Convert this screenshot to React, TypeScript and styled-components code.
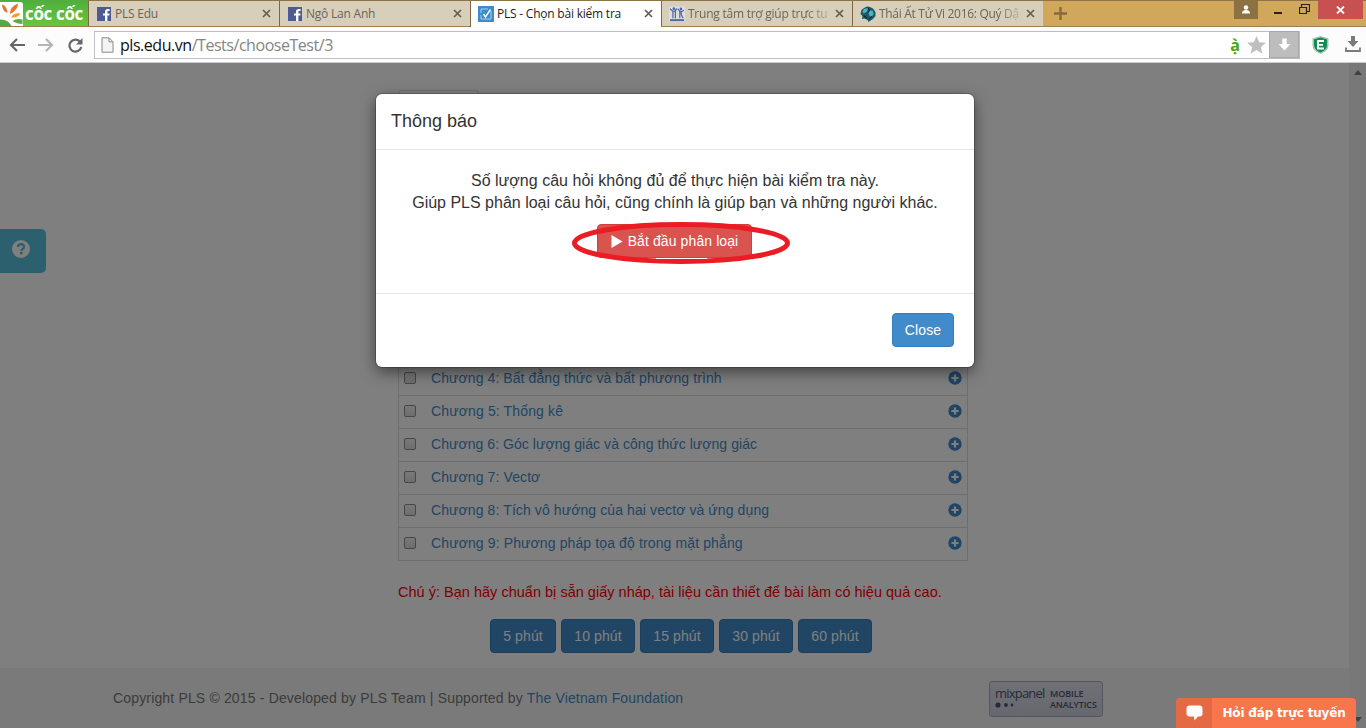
import React from 'react';
import styled, { createGlobalStyle } from 'styled-components';

const Global = createGlobalStyle`
  * { box-sizing: border-box; }
  html, body { margin: 0; padding: 0; }
  body { font-family: "Liberation Sans", Arial, sans-serif; font-size: 14px; line-height: 20px; color: #333; overflow: hidden; }
`;

const Window = styled.div`
  position: relative;
  width: 1366px;
  height: 728px;
  display: flex;
  flex-direction: column;
  overflow: hidden;
  background: #fff;
`;

/* ---------- browser chrome ---------- */
const TabStrip = styled.div`
  height: 27px;
  flex: none;
  display: flex;
  background: #d0a75b;
  border-top: 1px solid #8e7547;
  border-bottom: 1px solid #9c8052;
`;

const Brand = styled.div`
  width: 88px;
  height: 26px;
  margin-top: -1px;
  display: flex;
  align-items: center;
  background: linear-gradient(#4fae3d, #69c63b);
  color: #fff;
  font: 700 17px/25px "Open Sans", "Noto Sans", sans-serif;
  letter-spacing: -0.35px;
  white-space: nowrap;

  svg { flex: none; margin-right: 2px; }
`;

const Tab = styled.div<{ $active?: boolean }>`
  width: 191px;
  height: ${(p) => (p.$active ? 26 : 25)}px;
  flex: none;
  display: flex;
  align-items: center;
  padding: 0 8px ${(p) => (p.$active ? 1 : 0)}px 7px;
  border-left: 1px solid #806846;
  background: ${(p) => (p.$active ? '#fff' : '#d8cfba')};
  color: ${(p) => (p.$active ? '#1c1c1c' : '#6b6458')};
`;

const Favicon = styled.span`
  width: 16px;
  height: 16px;
  flex: none;
  display: flex;
  align-items: center;
  justify-content: center;
  margin-right: 3px;
`;

const TabTitle = styled.span<{ $fade?: boolean; $spacing?: number }>`
  flex: 1;
  min-width: 0;
  white-space: nowrap;
  font: 12px/20px "Open Sans", "Noto Sans", sans-serif;
  letter-spacing: ${(p) => p.$spacing ?? -0.22}px;
  ${(p) => p.$fade && 'mask-image: linear-gradient(90deg, #000 84%, rgba(0, 0, 0, 0.25) 100%);'}
`;

const TabClose = styled.svg`
  flex: none;
  margin-left: 6px;
`;

const WindowControls = styled.div`
  margin-left: auto;
  display: flex;
  height: 19px;
  margin-top: -1px;
`;

const Control = styled.div<{ $width: number; $bg?: string; $drop?: number }>`
  width: ${(p) => p.$width}px;
  height: 19px;
  display: flex;
  align-items: center;
  justify-content: center;
  padding-top: ${(p) => p.$drop ?? 0}px;
  background: ${(p) => p.$bg ?? 'transparent'};
`;

const Toolbar = styled.div`
  height: 36px;
  flex: none;
  display: flex;
  align-items: center;
  padding: 0 5px 0 8px;
  background: #fcfcfc;
  border-bottom: 1px solid #ccc;
`;

const NavIcons = styled.div`
  display: flex;
  width: 86px;
  gap: 11px;
`;

const AddressBar = styled.div`
  width: 1206px;
  height: 28px;
  display: flex;
  align-items: center;
  padding-left: 6px;
  border: 1px solid #bdbdc4;
  background: #fff;
`;

const Url = styled.span`
  flex: 1;
  margin-left: 6px;
  color: #858585;
  font: 16px/24px "Open Sans", "Noto Sans", sans-serif;
  letter-spacing: -0.46px;

  b { font-weight: 400; color: #111; }
`;

const AccentMark = styled.span`
  width: 14px;
  text-align: center;
  color: #43a615;
  font: 700 16px/22px "Noto Sans", sans-serif;
`;

const Star = styled.svg`
  margin-left: 5px;
`;

const SaveBox = styled.div`
  width: 30px;
  height: 27px;
  margin-left: 3px;
  display: flex;
  align-items: center;
  justify-content: center;
  background: #bdbdbd;
  border: 1px solid #a9a9a9;
`;

const Extensions = styled.div`
  display: flex;
  align-items: center;
  gap: 16px;
  margin-left: auto;
`;

/* ---------- web page ---------- */
const Viewport = styled.div`
  position: relative;
  flex: 1;
  display: flex;
`;

const Page = styled.div`
  flex: 1;
  display: flex;
  flex-direction: column;
`;

const Scrollbar = styled.div`
  width: 17px;
  display: flex;
  flex-direction: column;
  align-items: center;
  justify-content: space-between;
  padding: 7px 0 6px;
  background: #f1f1f1;
`;

const Content = styled.main`
  width: 570px;
  margin-left: 398px;
  padding-top: 27px;
  height: 605px;
  display: flex;
  flex-direction: column;
`;

const PageTab = styled.div`
  width: 81px;
  height: 42px;
  border: 1px solid #ddd;
  border-bottom: 0;
  border-radius: 4px 4px 0 0;
`;

const ChapterList = styled.ul`
  list-style: none;
  margin: 230px 0 0;
  padding: 0;
  border: 1px solid #ddd;
`;

const Chapter = styled.li`
  height: 33px;
  display: flex;
  align-items: center;
  padding: 0 5px 2px;
  color: #428bca;
  & + & { border-top: 1px solid #ddd; }
  &:first-child { height: 32px; }
`;

const Check = styled.span`
  width: 12px;
  height: 12px;
  margin-right: 15px;
  border: 1px solid #8f8f8f;
  border-radius: 2px;
  background: linear-gradient(#f2f2f2, #dcdcdc);
`;

const ChapterName = styled.span<{ $spacing: number }>`
  flex: 1;
  letter-spacing: ${(p) => p.$spacing}px;
`;

const Notice = styled.p`
  margin: 21px 0 17px;
  font-size: 14.5px;
  line-height: 20px;
  color: #f00;
  white-space: nowrap;
  letter-spacing: 0.015px;
`;

const Durations = styled.div`
  display: flex;
  gap: 5px;
  padding-left: 92px;
`;

const Button = styled.button<{ $tone?: 'danger'; $width: number }>`
  width: ${(p) => p.$width}px;
  height: 34px;
  padding: 0 0 0 ${(p) => (p.$tone ? 1 : 0)}px;
  display: flex;
  align-items: center;
  justify-content: center;
  gap: 5px;
  border: 1px solid ${(p) => (p.$tone ? '#d43f3a' : '#357ebd')};
  border-radius: 4px;
  background: ${(p) => (p.$tone ? '#d9534f' : '#428bca')};
  color: #fff;
  font: 14px/20px "Liberation Sans", Arial, sans-serif;
  letter-spacing: 0.1px;
  white-space: nowrap;
`;

const Footer = styled.footer`
  height: 60px;
  display: flex;
  align-items: center;
  padding: 0 246px 0 113px;
  justify-content: space-between;
  background: #f5f5f5;
  color: #777;

  a { color: #428bca; }
`;

const Copyright = styled.span`
  letter-spacing: 0.16px;
`;

const Badge = styled.div`
  width: 114px;
  height: 36px;
  margin-top: 2px;
  padding: 4px 0 0 5px;
  display: grid;
  grid-template-columns: 55px 1fr;
  grid-template-rows: 15px 10px;
  border: 1px solid #a9abc0;
  border-radius: 3px;
  background: linear-gradient(#e0e2ee, #cdd0de);
  color: #51536e;
`;

const BadgeName = styled.span`
  font: 13px/14px "Open Sans", sans-serif;
  letter-spacing: -0.8px;
`;

const BadgeWord = styled.span<{ $line: number }>`
  font: 600 9px/${(p) => p.$line}px "Open Sans", sans-serif;
  letter-spacing: -0.1px;
`;

const HelpTab = styled.div`
  position: absolute;
  left: 0;
  top: 166px;
  width: 46px;
  height: 44px;
  padding: 0 0 4px 12px;
  display: flex;
  align-items: center;
  border-radius: 0 5px 5px 0;
  background: #5bc0de;
`;

const Backdrop = styled.div`
  position: absolute;
  inset: 0;
  background: rgba(0, 0, 0, 0.5);
`;

/* ---------- dialog ---------- */
const Dialog = styled.section`
  position: absolute;
  left: 376px;
  top: 31px;
  width: 598px;
  height: 273px;
  display: flex;
  flex-direction: column;
  border-radius: 6px;
  background: #fff;
  box-shadow: 0 0 0 1px rgba(0, 0, 0, 0.2), 0 5px 15px rgba(0, 0, 0, 0.5);
`;

const DialogHeader = styled.header`
  height: 56px;
  padding: 15px 15px 0;
  border-bottom: 1px solid #e5e5e5;
  font-size: 18px;
  line-height: 24px;
`;

const DialogBody = styled.div`
  height: 143px;
  padding-top: 20px;
  display: flex;
  flex-direction: column;
  align-items: center;
  font-size: 16px;
  line-height: 22px;
`;

const Line = styled.span<{ $spacing?: number }>`
  white-space: nowrap;
  letter-spacing: ${(p) => p.$spacing ?? 0}px;
`;

const StartArea = styled.div`
  position: relative;
  margin: 10px 2px 0 0;
`;

const Highlight = styled.svg`
  position: absolute;
  left: -26px;
  top: -5px;
`;

const DialogFooter = styled.footer`
  flex: 1;
  display: flex;
  align-items: center;
  justify-content: flex-end;
  padding: 0 20px 2px 0;
  border-top: 1px solid #e5e5e5;
`;

/* ---------- chat ---------- */
const Chat = styled.div`
  position: absolute;
  right: 10px;
  bottom: 0;
  width: 180px;
  height: 30px;
  display: flex;
  overflow: hidden;
  border-radius: 4px 4px 0 0;
  background: #f9754b;
`;

const ChatIcon = styled.div`
  width: 36px;
  display: flex;
  align-items: center;
  justify-content: center;
  background: #e36a45;
`;

const ChatLabel = styled.span`
  flex: 1;
  text-align: center;
  color: #fff;
  font: 700 12px/30px "DejaVu Sans", Verdana, sans-serif;
  letter-spacing: -0.18px;
  white-space: nowrap;
`;

const Facebook = () => (
  <svg width="14" height="14" viewBox="0 0 14 14">
    <rect width="14" height="14" fill="#4d5b8e" />
    <path d="M8 14V8.6H6V6.4h2V4.8C8 2.9 9 2 10.8 2H12.6v2.1h-1.2c-.8 0-1 .3-1 1v1.3h2.2l-.3 2.2h-1.9V14Z" fill="#fff" />
  </svg>
);

const CheckPage = () => (
  <svg width="16" height="16" viewBox="0 0 16 16">
    <rect width="16" height="16" fill="#3b8ccc" />
    <path d="M3 7V3h7M3 9v4h10V5" fill="none" stroke="#a9d0ee" strokeWidth="1" />
    <path d="m5.500 8 2 3L12.500 3.500" fill="none" stroke="#fff" strokeWidth="1.400" />
  </svg>
);

const People = () => (
  <svg width="17" height="16" viewBox="0 0 17 16" fill="none" stroke="#4b66a6">
    <rect width="17" height="16" fill="#dfdedb" stroke="none" />
    <path d="M1 14.500h15" strokeWidth="2" />
    <path d="M1 2.500 4 5h2.500l2-3M4.200 5v7.500M6.800 5v7.500M9.500 2.500l2 2.800h2l2.500-1.300M11.500 5v7.500M13 5v3.500l2 4" strokeWidth="1.300" />
    <circle cx="5.200" cy="2.300" r="1.400" fill="#4b66a6" stroke="none" />
    <circle cx="12.700" cy="2.600" r="1.400" fill="#4b66a6" stroke="none" />
  </svg>
);

const Globe = () => (
  <svg width="16" height="16" viewBox="0 0 16 16">
    <path d="m4 2 3-1.500 3 .5 3 1.500 2.500 3.500v4L13 13l-2.500 1.500L8.500 16l-1-2-3-1.500L2 13l.5-3L.5 8l1-4Z" fill="#1d5a68" />
    <path d="m4 3 4-1-1 3.500-3.500 2L2.500 6Zm5.500 1L13 5l.5 3.500-3 3-2-4Z" fill="#4fb3c2" />
    <path d="m8 1.500 1.500 3-1.500 2M11.500 10l-2 3.500M3.500 9.500 7 12.500" fill="none" stroke="#102c38" strokeWidth="1.200" />
  </svg>
);

const Cross = () => (
  <TabClose width="9" height="9" viewBox="0 0 9 9">
    <path d="m1 1 7 7M8 1 1 8" stroke="#665d50" strokeWidth="1.7" />
  </TabClose>
);

const PlusCircle = () => (
  <svg width="14" height="14" viewBox="0 0 14 14">
    <circle cx="7" cy="7" r="6.7" fill="#428bca" />
    <path d="M7 3.4v7.2M3.4 7h7.2" stroke="#fff" strokeWidth="2.2" />
  </svg>
);

const chapters: [string, number][] = [
  ['Chương 4: Bất đẳng thức và bất phương trình', 0.085],
  ['Chương 5: Thống kê', 0.14],
  ['Chương 6: Góc lượng giác và công thức lượng giác', 0.055],
  ['Chương 7: Vectơ', 0.1],
  ['Chương 8: Tích vô hướng của hai vectơ và ứng dụng', 0.1],
  ['Chương 9: Phương pháp tọa độ trong mặt phẳng', 0.12],
];

const durations: [string, number][] = [
  ['5 phút', 66],
  ['10 phút', 74],
  ['15 phút', 74],
  ['30 phút', 74],
  ['60 phút', 74],
];

export default function App() {
  return (
    <Window>
      <Global />
      <TabStrip>
        <Brand>
          <svg width="23" height="26" viewBox="0 0 23 26">
            <path d="M0 2h20q3 0 3 3v21H0Z" fill="#fff" />
            <path d="M2 4.500q5 1.500 5.500 8.500Q2 11 2 4.500Z" fill="#ee6f2a" />
            <path d="M18 3.500Q18 10 10 14q0-7.500 8-10.500Z" fill="#ef7326" />
            <path d="M20.500 13.500Q18 18 11 17.500q3-5 9.500-4Z" fill="#f4992b" />
            <path d="M22.500 19.500v4.500q-6 0-10-3 4-3 10-1.500Z" fill="#58b043" />
            <path d="M0 19.500q8-.5 11.500 6.500H0Z" fill="#54a944" />
          </svg>
          cốc cốc
        </Brand>
        <Tab>
          <Favicon><Facebook /></Favicon>
          <TabTitle>PLS Edu</TabTitle>
          <Cross />
        </Tab>
        <Tab>
          <Favicon><Facebook /></Favicon>
          <TabTitle>Ngô Lan Anh</TabTitle>
          <Cross />
        </Tab>
        <Tab $active>
          <Favicon><CheckPage /></Favicon>
          <TabTitle>PLS - Chọn bài kiểm tra</TabTitle>
          <Cross />
        </Tab>
        <Tab>
          <Favicon><People /></Favicon>
          <TabTitle $fade $spacing={-0.24}>Trung tâm trợ giúp trực tu</TabTitle>
          <Cross />
        </Tab>
        <Tab>
          <Favicon><Globe /></Favicon>
          <TabTitle $fade $spacing={-0.3}>Thái Ất Tử Vi 2016: Quý Dậ</TabTitle>
          <Cross />
        </Tab>
        <Control $width={34} $drop={6}>
          <svg width="13" height="13" viewBox="0 0 13 13">
            <path d="M6.5 0v13M0 6.5h13" stroke="#87693c" strokeWidth="2.4" />
          </svg>
        </Control>
        <WindowControls>
          <Control $width={24} $bg="#8c7243">
            <svg width="10" height="10" viewBox="0 0 10 10" fill="#fff">
              <circle cx="5" cy="2.500" r="2.200" />
              <path d="M1 8.500q0-3.500 4-3.500t4 3.500Z" />
            </svg>
          </Control>
          <Control $width={40} $drop={3}>
            <svg width="8" height="8" viewBox="0 0 8 8"><path d="M0 6h8" stroke="#2a2118" strokeWidth="2" /></svg>
          </Control>
          <Control $width={12}>
            <svg width="11" height="11" viewBox="0 0 11 11" fill="none" stroke="#2a2118">
              <path d="M.5 3.5h7v6h-7ZM2.5 3V.5h8v7H8" strokeWidth="1.2" />
            </svg>
          </Control>
          <Control $width={8} />
          <Control $width={45} $bg="#c75050">
            <svg width="9" height="8" viewBox="0 0 9 8"><path d="m1 .5 7 7M8 .5l-7 7" stroke="#fff" strokeWidth="1.8" /></svg>
          </Control>
          <Control $width={3} />
        </WindowControls>
      </TabStrip>

      <Toolbar>
        <NavIcons>
          <svg width="18" height="16" viewBox="0 0 18 16" fill="none" stroke="#666" strokeWidth="2.2"><path d="M17 8H4M9 2 3 8l6 6" /></svg>
          <svg width="18" height="16" viewBox="0 0 18 16" fill="none" stroke="#b5b5b5" strokeWidth="2.2"><path d="M1 8h13M9 2l6 6-6 6" /></svg>
          <svg width="18" height="16" viewBox="0 0 18 16"><path d="M14.3 5A6 6 0 1 0 15.3 10" fill="none" stroke="#666" strokeWidth="2.2" /><path d="M16.5 1v6.5H10Z" fill="#666" /></svg>
        </NavIcons>
        <AddressBar>
          <svg width="13" height="16" viewBox="0 0 13 16"><path d="M1 .8h7l4 4v10.4H1ZM8 .8v4h4" fill="#f3f3f3" stroke="#8a8a8a" /></svg>
          <Url><b>pls.edu.vn</b>/Tests/chooseTest/3</Url>
          <AccentMark>ạ̀</AccentMark>
          <Star width="19" height="18" viewBox="0 0 19 18"><path d="m9.500 0 2.700 6.300 6.600.5-5 4.500 1.700 6.500-6-3.700-6 3.700 1.700-6.500-5-4.500 6.600-.5Z" fill="#bfbfbf" /></Star>
          <SaveBox>
            <svg width="13" height="13" viewBox="0 0 13 13"><path d="M4.300.5h4.400V6h3.800l-6 6.500L.5 6h3.800Z" fill="#fff" /></svg>
          </SaveBox>
        </AddressBar>
        <Extensions>
          <svg width="17" height="18" viewBox="0 0 17 18">
            <path d="M8.500 0 16.500 2.500V9q0 6-8 9Q.5 15 .5 9V2.500Z" fill="#9cc5ae" />
            <path d="M8.500 1.500 15 3.500V9q0 5-6.500 7.500Q2 14 2 9V3.500Z" fill="#168a55" />
            <path d="M12 5H6v7.500h6M6 8.800h5" fill="none" stroke="#fff" strokeWidth="1.800" />
          </svg>
          <svg width="16" height="17" viewBox="0 0 16 17">
            <path d="M6 0h4v5h3.500L8 11 2.500 5H6Z" fill="#7a7a7a" />
            <path d="M1 11.500V15h14v-3.500" fill="none" stroke="#7a7a7a" strokeWidth="1.800" />
          </svg>
        </Extensions>
      </Toolbar>

      <Viewport>
        <Page>
          <Content>
            <PageTab />
            <ChapterList>
              {chapters.map(([name, spacing]) => (
                <Chapter key={name}>
                  <Check />
                  <ChapterName $spacing={spacing}>{name}</ChapterName>
                  <PlusCircle />
                </Chapter>
              ))}
            </ChapterList>
            <Notice>Chú ý: Bạn hãy chuẩn bị sẵn giấy nháp, tài liệu cần thiết để bài làm có hiệu quả cao.</Notice>
            <Durations>
              {durations.map(([label, width]) => (
                <Button key={label} $width={width}>{label}</Button>
              ))}
            </Durations>
          </Content>
          <Footer>
            <Copyright>Copyright PLS © 2015 - Developed by PLS Team | Supported by <a>The Vietnam Foundation</a></Copyright>
            <Badge>
              <BadgeName>mixpanel</BadgeName>
              <BadgeWord $line={16}>MOBILE</BadgeWord>
              <svg width="20" height="8" viewBox="0 0 20 8" fill="#51536e">
                <circle cx="3" cy="4" r="2.600" /><circle cx="11" cy="4" r="1.900" /><circle cx="17" cy="4" r="1.400" />
              </svg>
              <BadgeWord $line={7}>ANALYTICS</BadgeWord>
            </Badge>
          </Footer>
        </Page>
        <Scrollbar>
          <svg width="8" height="5" viewBox="0 0 8 5"><path d="M0 5 4 0l4 5Z" fill="#808080" /></svg>
          <svg width="8" height="5" viewBox="0 0 8 5"><path d="M0 0h8L4 5Z" fill="#808080" /></svg>
        </Scrollbar>
        <HelpTab>
          <svg width="18" height="18" viewBox="0 0 18 18">
            <circle cx="9" cy="9" r="9" fill="#fff" />
            <path d="M6 7q0-2.800 3-2.800T12 7q0 1.300-1.500 2.100Q9.300 9.800 9.300 11" fill="none" stroke="#5bc0de" strokeWidth="2.200" />
            <rect x="8" y="12" width="2.500" height="2.300" fill="#5bc0de" />
          </svg>
        </HelpTab>
        <Backdrop />
        <Dialog>
          <DialogHeader>Thông báo</DialogHeader>
          <DialogBody>
            <Line $spacing={0.02}>Số lượng câu hỏi không đủ để thực hiện bài kiểm tra này.</Line>
            <Line>Giúp PLS phân loại câu hỏi, cũng chính là giúp bạn và những người khác.</Line>
            <StartArea>
              <Button $tone="danger" $width={155}>
                <svg width="12" height="13" viewBox="0 0 12 13"><path d="M.5 0 11.500 6.500.5 13Z" fill="#fff" /></svg>
                Bắt đầu phân loại
              </Button>
              <Highlight width="220" height="48" viewBox="0 0 220 48">
                <ellipse cx="110" cy="24" rx="106.500" ry="18.500" fill="none" stroke="#ec1c24" strokeWidth="5" />
                <path d="M85 39.500h51" stroke="#fff" />
              </Highlight>
            </StartArea>
          </DialogBody>
          <DialogFooter>
            <Button $width={62}>Close</Button>
          </DialogFooter>
        </Dialog>
        <Chat>
          <ChatIcon>
            <svg width="17" height="16" viewBox="0 0 17 16"><path d="M3.500.5h10q3 0 3 3v5q0 3-3 3H12l-3.500 4-.5-4H3.500q-3 0-3-3v-5q0-3 3-3Z" fill="#fff" /></svg>
          </ChatIcon>
          <ChatLabel>Hỏi đáp trực tuyến</ChatLabel>
        </Chat>
      </Viewport>
    </Window>
  );
}
